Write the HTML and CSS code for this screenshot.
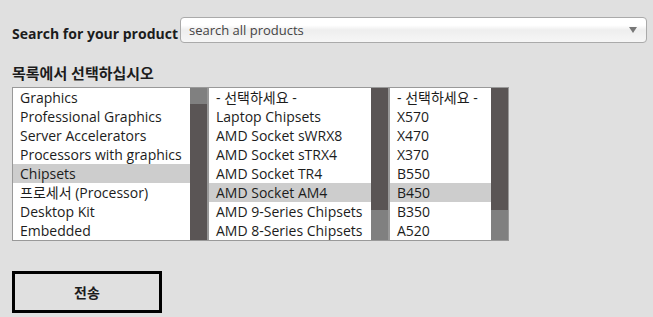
FILE: index.html
```html
<!DOCTYPE html>
<html lang="ko">
  <head>
    <meta charset="UTF-8" />
    <meta name="viewport" content="width=device-width, initial-scale=1.0" />
    <title>제품 검색</title>
    <link rel="stylesheet" href="styles.css">
  </head>
  <body>
    <div class="search">
      <label class="search-label">Search for your product</label>
      <div class="search-box">
        <span>search all products</span>
        <i class="arrow"></i>
      </div>
    </div>

    <p class="list-label">목록에서 선택하십시오</p>

    <div class="lists">
      <div class="list list-1">
        <ul class="items">
          <li>Graphics</li>
          <li>Professional Graphics</li>
          <li>Server Accelerators</li>
          <li>Processors with graphics</li>
          <li class="active">Chipsets</li>
          <li>프로세서 (Processor)</li>
          <li>Desktop Kit</li>
          <li>Embedded</li>
        </ul>
        <div class="bar end"><div class="thumb" style="height: 136px"></div></div>
      </div>

      <div class="list list-2">
        <ul class="items">
          <li>- 선택하세요 -</li>
          <li>Laptop Chipsets</li>
          <li>AMD Socket sWRX8</li>
          <li>AMD Socket sTRX4</li>
          <li>AMD Socket TR4</li>
          <li class="active">AMD Socket AM4</li>
          <li>AMD 9-Series Chipsets</li>
          <li>AMD 8-Series Chipsets</li>
        </ul>
        <div class="bar"><div class="thumb" style="height: 122px"></div></div>
      </div>

      <div class="list list-3">
        <ul class="items">
          <li>- 선택하세요 -</li>
          <li>X570</li>
          <li>X470</li>
          <li>X370</li>
          <li>B550</li>
          <li class="active">B450</li>
          <li>B350</li>
          <li>A520</li>
        </ul>
        <div class="bar"><div class="thumb" style="height: 122px"></div></div>
      </div>
    </div>

    <button class="submit">전송</button>
  </body>
</html>
```

FILE: styles.css
```css
* {
  margin: 0;
  padding: 0;
  box-sizing: border-box;
}

body {
  background-color: #e0e0e0;
  color: #1c1c1c;
  font-family: "Open Sans", "Noto Sans CJK KR", sans-serif;
  font-size: 14px;
  padding: 17px 6px 0 12px;
}

/* 검색 */
.search {
  display: flex;
  align-items: center;
  gap: 2px;
  height: 26px;
}

.search-label {
  flex-shrink: 0;
  font-weight: bold;
  white-space: nowrap;
  padding-top: 6px;
}

.search-box {
  flex: 1;
  display: flex;
  align-items: center;
  justify-content: space-between;
  height: 26px;
  padding: 0 9px 0 8px;
  border: 1px solid #aaa;
  border-radius: 4px;
  background: linear-gradient(#ffffff 30%, #eeeeee 50%, #f6f6f6 100%);
  color: #444;
  font-size: 13px;
}

.search-box .arrow {
  width: 0;
  height: 0;
  border-left: 4px solid transparent;
  border-right: 4px solid transparent;
  border-top: 6px solid #777;
}

.list-label {
  font-size: 15px;
  font-weight: bold;
  line-height: 20px;
  margin-top: 20px;
}

/* 목록 */
.lists {
  display: flex;
  margin-top: 4px;
}

.list {
  display: flex;
  height: 154px;
  border: 1px solid #999;
  background-color: #fff;
}

.list-1 {
  width: 196px;
}

.list-2 {
  width: 181px;
}

.list-3 {
  width: 120px;
}

.items {
  flex: 1;
  list-style: none;
  overflow: hidden;
}

.items li {
  height: 19px;
  line-height: 19px;
  padding-left: 7px;
  white-space: nowrap;
}

.items li.active {
  background-color: #cdcdcd;
}

.bar {
  display: flex;
  flex-direction: column;
  width: 17px;
  background-color: #808080;
}

.bar.end {
  justify-content: flex-end;
}

.thumb {
  background-color: #5a5555;
}

/* 버튼 */
.submit {
  display: block;
  width: 150px;
  height: 42px;
  margin-top: 30px;
  border: 3px solid #000;
  background-color: transparent;
  color: #1c1c1c;
  font-family: "Open Sans", "Noto Sans CJK KR", sans-serif;
  font-size: 14px;
  font-weight: bold;
  cursor: pointer;
}
```
